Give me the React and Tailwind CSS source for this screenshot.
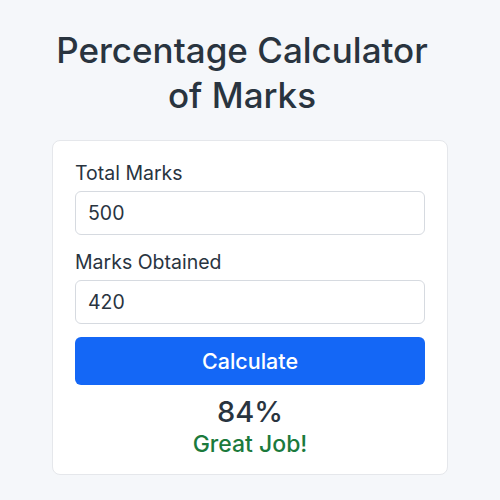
import { useState } from 'react';

export default function App() {
  const [total, setTotal] = useState('500');
  const [obtained, setObtained] = useState('420');
  const [result, setResult] = useState(84);

  const calculate = () => {
    const t = parseFloat(total);
    const o = parseFloat(obtained);
    if (t > 0 && !isNaN(o)) setResult(Math.round((o / t) * 100));
  };

  return (
    <div className="min-h-[500px] w-[500px] bg-[#f5f7fa] text-[#29343f] font-['Inter','Liberation_Sans',sans-serif]">
      <div className="pt-[28px] pr-[16px]">
        <h1 className="text-center text-[35px] leading-[45px] font-medium">
          Percentage Calculator
          <br />
          of Marks
        </h1>
      </div>

      <div className="mx-auto mt-[22px] w-[396px] rounded-[8px] border border-[#e5e7eb] bg-white px-[22px] pt-[18px] pb-[16px]">
        {/* total */}
        <label className="block text-[19.5px] leading-[28px]">Total Marks</label>
        <input
          value={total}
          onChange={(e) => setTotal(e.target.value)}
          className="mt-[4px] block h-[44px] w-full rounded-[6px] border border-[#d6dae0] px-[12px] text-[19.5px] outline-none"
        />

        {/* obtained */}
        <label className="mt-[13px] block text-[19.5px] leading-[28px]">Marks Obtained</label>
        <input
          value={obtained}
          onChange={(e) => setObtained(e.target.value)}
          className="mt-[4px] block h-[44px] w-full rounded-[6px] border border-[#d6dae0] px-[12px] text-[19.5px] outline-none"
        />

        <button
          onClick={calculate}
          className="mt-[13px] h-[48px] w-full rounded-[6px] bg-[#1467f6] text-[21.5px] font-medium text-white"
        >
          Calculate
        </button>

        <div className="mt-[9px] text-center text-[29px] leading-[36px] font-medium">{result}%</div>
        <div className="text-center text-[23px] leading-[28px] font-medium text-[#1b7a3c]">Great Job!</div>
      </div>
    </div>
  );
}
